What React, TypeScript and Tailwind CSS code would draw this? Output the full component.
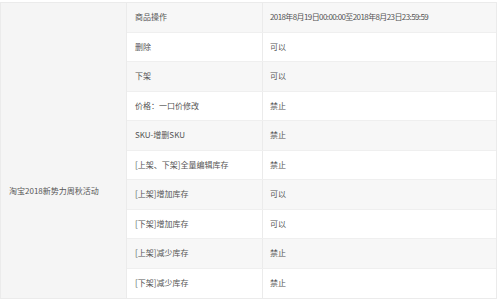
const ROWS: [string, string][] = [
  ["商品操作", "2018年8月19日00:00:00至2018年8月23日23:59:59"],
  ["删除", "可以"],
  ["下架", "可以"],
  ["价格：一口价修改", "禁止"],
  ["SKU-增删SKU", "禁止"],
  ["[上架、下架]全量编辑库存", "禁止"],
  ["[上架]增加库存", "可以"],
  ["[下架]增加库存", "可以"],
  ["[上架]减少库存", "禁止"],
  ["[下架]减少库存", "禁止"],
];

export default function App() {
  return (
    <div
      className="h-[302px] w-[499px] overflow-hidden bg-white pt-[2px] text-[8px] text-[#555]"
      style={{ fontFamily: '"Noto Sans CJK SC", "Noto Sans", sans-serif' }}
    >
      <div className="flex h-[297px] w-[497px] border border-[#ebebeb]">
        <div className="w-[126px] shrink-0 border-r border-[#ebebeb] bg-[#f5f5f5] pl-[8px] pt-[182px] leading-[12px]">
          淘宝2018新势力周秋活动
        </div>
        <div className="grid flex-1 grid-rows-10">
          {ROWS.map(([op, value], i) => (
            <div
              key={op}
              className={`grid grid-cols-[136px_1fr] items-stretch border-b border-[#efefef] last:border-b-0 ${
                i % 2 === 0 ? "bg-[#f7f7f7]" : "bg-white"
              }`}
            >
              <div className="flex items-center border-r border-[#ebebeb] pl-[8px]">{op}</div>
              <div className={`flex items-center pl-[7px] ${i === 0 ? "tracking-[-0.6px]" : ""}`}>{value}</div>
            </div>
          ))}
        </div>
      </div>
    </div>
  );
}
